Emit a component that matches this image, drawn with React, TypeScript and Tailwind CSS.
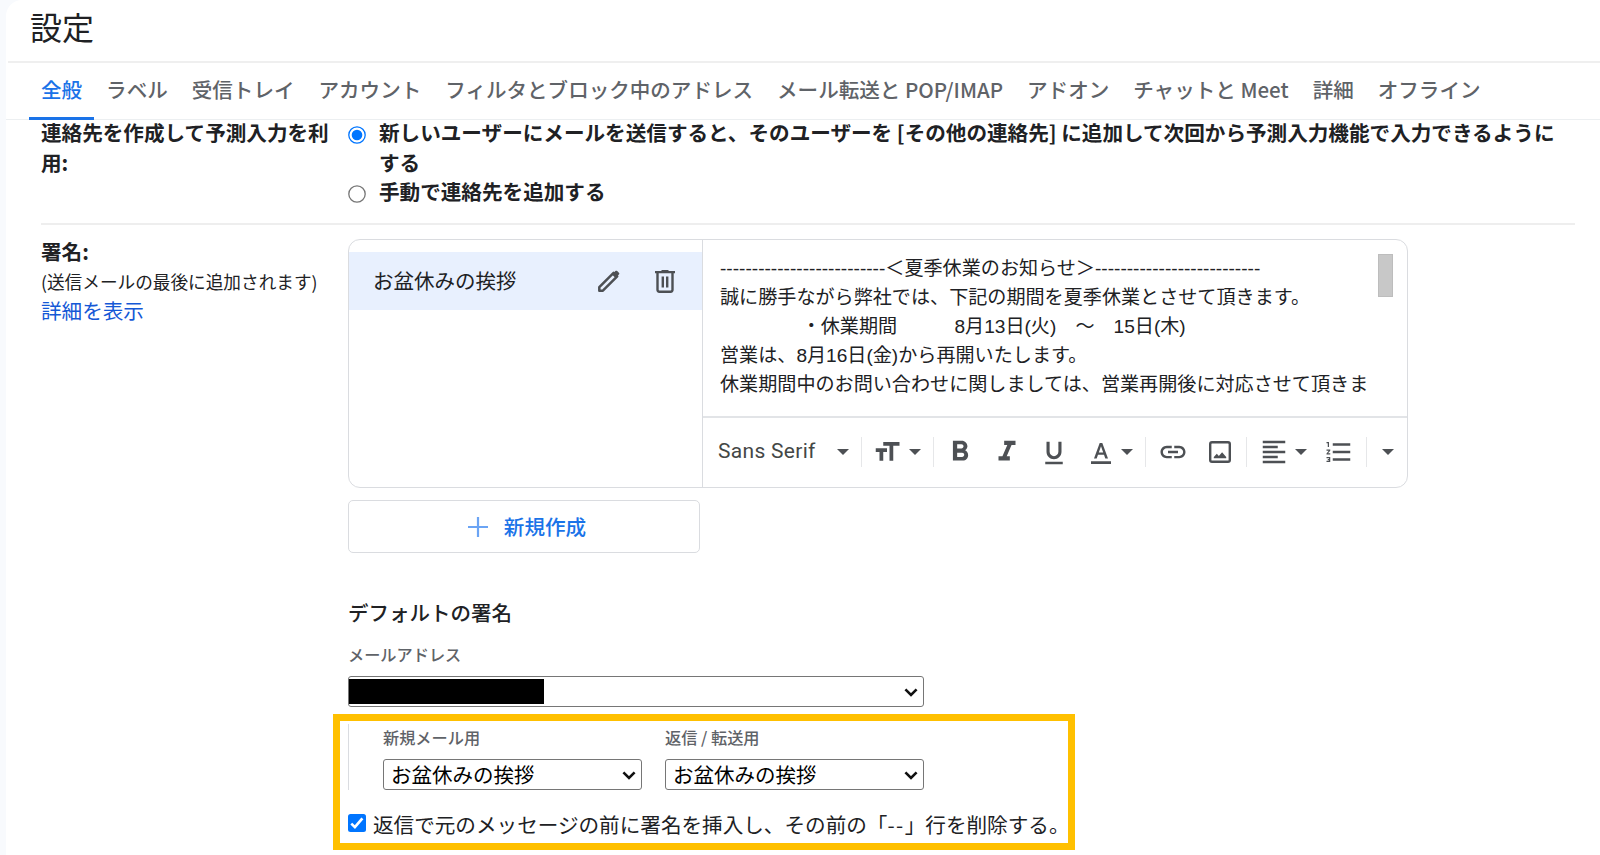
import type { ReactNode } from "react";
import { clsx } from "clsx";
import {
  MdFormatAlignLeft,
  MdFormatBold,
  MdFormatItalic,
  MdFormatListNumbered,
  MdFormatSize,
  MdFormatUnderlined,
  MdLink,
} from "react-icons/md";

const TABS = [
  "全般",
  "ラベル",
  "受信トレイ",
  "アカウント",
  "フィルタとブロック中のアドレス",
  "メール転送と POP/IMAP",
  "アドオン",
  "チャットと Meet",
  "詳細",
  "オフライン",
];

const DASHES = "-".repeat(26);

const SIGNATURE = [
  `${DASHES}＜夏季休業のお知らせ＞${DASHES}`,
  "誠に勝手ながら弊社では、下記の期間を夏季休業とさせて頂きます。",
  "　　　　 ・休業期間　　　8月13日(火)　～　15日(木)",
  "営業は、8月16日(金)から再開いたします。",
  "休業期間中のお問い合わせに関しましては、営業再開後に対応させて頂きま",
];

function Caret({ className }: { className?: string }) {
  return (
    <svg viewBox="0 0 12 6" className={clsx("h-1.5 w-3 shrink-0 fill-[#4d5054]", className)}>
      <path d="M0 0h12L6 6z" />
    </svg>
  );
}

function Divider({ className }: { className?: string }) {
  return <div className={clsx("h-[30px] w-px shrink-0 bg-[#e6e7e9]", className)} />;
}

function Radio({ checked }: { checked?: boolean }) {
  return (
    <svg viewBox="0 0 18 18" className="mt-[7.5px] h-[18px] w-[18px] shrink-0">
      <circle cx="9" cy="9" r="8.2" fill="#fff" stroke={checked ? "#0075ff" : "#767676"} strokeWidth="1.3" />
      {checked && <circle cx="9" cy="9" r="5.3" fill="#0075ff" />}
    </svg>
  );
}

function SelectBox({ children, className }: { children?: ReactNode; className?: string }) {
  return (
    <div
      className={clsx(
        "flex h-[31px] items-center justify-between rounded-[3px] border border-[#767676] bg-white pr-[5px] text-[20.5px] leading-[27px] text-black",
        className,
      )}
    >
      {children}
      <svg viewBox="0 0 14 9" className="mt-px h-[9px] w-3.5 shrink-0">
        <path d="M1.4 1.4 7 7l5.6-5.6" fill="none" stroke="#111" strokeWidth="2.6" />
      </svg>
    </div>
  );
}

function Toolbar() {
  return (
    <div className="flex h-[67px] items-center pl-[15px] text-[#4d5054]">
      <span className="w-[119px] shrink-0 pb-px font-[Roboto] text-[21px] leading-none tracking-[0.3px] text-[#444746]">Sans Serif</span>
      <Caret />
      <Divider className="ml-3" />
      <MdFormatSize className="ml-2.5 h-[30px] w-[30px] shrink-0" />
      <Caret className="ml-[7px]" />
      <Divider className="ml-3" />
      <MdFormatBold className="ml-[9px] h-[34px] w-[34px] shrink-0" />
      <MdFormatItalic className="ml-[13px] h-[34px] w-[34px] shrink-0" />
      <MdFormatUnderlined className="mt-0.5 ml-[15px] h-[30px] w-[30px] shrink-0" />
      <svg viewBox="0 0 20 21" className="mt-[3px] ml-[22px] h-[21px] w-5 shrink-0" fill="currentColor">
        <path d="M0 18.2h20V21H0zM8.7 0h2.6L17 15.5h-2.7L13 11.8H7l-1.3 3.7H3zM7.8 9.5h4.4L10 3.2z" />
      </svg>
      <Caret className="ml-2.5" />
      <Divider className="ml-3" />
      <MdLink className="ml-3 h-[30px] w-[30px] shrink-0" />
      <svg viewBox="0 0 22 22" className="ml-[21px] h-[22px] w-[22px] shrink-0">
        <rect x="1.2" y="1.2" width="19.6" height="19.6" rx="1.8" fill="none" stroke="currentColor" strokeWidth="2.4" />
        <path d="M4.8 17.2v-1.3l3-3.2 2.1 2.2 3.2-3.7 4.1 4.7v1.3z" fill="currentColor" />
      </svg>
      <Divider className="ml-[15px]" />
      <MdFormatAlignLeft className="ml-3 h-[30px] w-[30px] shrink-0" />
      <Caret className="ml-1.5" />
      <MdFormatListNumbered className="ml-[17px] h-[30px] w-[30px] shrink-0" />
      <Divider className="ml-3" />
      <Caret className="ml-[15px]" />
    </div>
  );
}

function SignatureEditor() {
  return (
    <div className="flex h-[249px] w-[1060px] overflow-hidden rounded-xl border border-[#dadce0]">
      <div className="w-[354px] shrink-0 border-r border-[#dadce0] pt-3">
        <div className="flex h-[58px] items-center bg-[#e8f0fe] pl-6">
          <span className="w-[224px] pb-0.5 text-[20.5px]">お盆休みの挨拶</span>
          <svg viewBox="0 0 24 24" className="h-6 w-6 text-[#4d5054]" fill="none" stroke="currentColor" strokeWidth="2.5">
            <path d="M2.3 21.7v-3.6L16.6 3.8l3.6 3.6L5.9 21.7z" strokeLinejoin="round" />
            <path d="m15 5.5 3.5 3.5 3.4-3.4c.6-.6.6-1.2 0-1.8l-1.7-1.7c-.6-.6-1.2-.6-1.8 0z" fill="currentColor" stroke="none" />
          </svg>
          <svg viewBox="0 0 20 23" className="ml-[34px] h-[23px] w-5 text-[#4d5054]" fill="none" stroke="currentColor" strokeWidth="2.4">
            <path d="M0 2.1h20M2.5 2.5v17.3c0 1.2.7 1.9 1.9 1.9h11.2c1.2 0 1.9-.7 1.9-1.9V2.5M7.8 6.4v11.2M12.2 6.4v11.2" />
            <path d="M6.5 1.1h7" />
          </svg>
        </div>
      </div>
      <div className="min-w-0 flex-1">
        <div className="flex h-[178px] justify-between border-b-2 border-[#e2e4e7] pt-3.5 pr-3.5 pl-[17px]">
          <div className="font-['Liberation_Sans','Noto_Sans_CJK_JP',sans-serif] text-[19.1px] leading-[29px] whitespace-pre">
            {SIGNATURE.map((line) => (
              <div key={line}>{line}</div>
            ))}
          </div>
          <div className="h-[43px] w-[15px] border border-[#bdbdbd] bg-[#c8c8c8]" />
        </div>
        <Toolbar />
      </div>
    </div>
  );
}

export default function App() {
  return (
    <div className="h-[855px] w-[1600px] overflow-hidden bg-[#f8fafd] pl-1.5 font-['Noto_Sans_CJK_JP',sans-serif] text-[#202124]">
      <div className="h-full rounded-tl-2xl bg-white">
        <header className="flex h-[61px] items-center pb-2.5 pl-6">
          <h1 className="text-[32px] leading-none">設定</h1>
        </header>
        <div className="ml-0.5 h-0.5 bg-[#efefef]" />

        <nav className="flex h-[57px] border-b border-[#eceff1] pl-[23px] text-[20.55px] font-medium whitespace-nowrap text-[#5f6368]">
          {TABS.map((tab, i) => (
            <div
              key={tab}
              className={clsx(
                "flex items-center px-3",
                i === 0 ? "-mb-px border-b-[3px] border-[#1a73e8] pb-0.5 text-[#1a73e8]" : "pb-1",
              )}
            >
              {tab}
            </div>
          ))}
        </nav>

        <section className="mr-[25px] ml-[35px] flex h-[105px] border-b-2 border-[#eee] text-[20.6px] leading-[29.5px] font-bold">
          <div className="-mt-0.5 w-[307px] shrink-0 pr-4">連絡先を作成して予測入力を利用:</div>
          <div className="-mt-0.5">
            <div className="flex gap-[13px]">
              <Radio checked />
              <span className="w-[1182px]">
                新しいユーザーにメールを送信すると、そのユーザーを [その他の連絡先] に追加して次回から予測入力機能で入力できるようにする
              </span>
            </div>
            <div className="flex gap-[13px]">
              <Radio />
              <span>手動で連絡先を追加する</span>
            </div>
          </div>
        </section>

        <section className="ml-[35px] flex pt-3.5">
          <div className="-mt-0.5 w-[307px] shrink-0 text-[20.6px] leading-[29.5px]">
            <div className="font-bold">署名:</div>
            <div className="text-[17.65px]">(送信メールの最後に追加されます)</div>
            <a className="text-[#1558d6]">詳細を表示</a>
          </div>

          <div>
            <SignatureEditor />
            <button className="mt-3 flex h-[53px] w-[352px] items-center justify-center gap-4 rounded-[5px] border border-[#dadce0] pl-1.5 text-[20.6px] font-medium text-[#1a73e8]">
              <svg viewBox="0 0 20 20" className="h-5 w-5" stroke="#6ba4f4" strokeWidth="2.2">
                <path d="M10 0v20M0 10h20" />
              </svg>
              新規作成
            </button>

            <h2 className="mt-11 text-[20.5px] leading-[30px] font-medium">デフォルトの署名</h2>
            <div className="mt-[15px] text-[16.2px] leading-6 font-medium text-[#5f6368]">メールアドレス</div>
            <SelectBox className="mt-2.5 w-[576px]">
              <span className="h-[25px] w-[195px] bg-black" />
            </SelectBox>

            {/* Per-message defaults, ringed by the highlight frame */}
            <div className="relative pt-[17px]">
              <div className="absolute top-[7px] -left-[15px] h-[136px] w-[742px] border-[7.5px] border-[#ffc000]" />
              <div className="flex h-[66px] gap-[23px] border-l border-[#dadce0] pl-[34px]">
                <div>
                  <div className="h-[35px] pt-px text-[16.2px] leading-6 font-medium text-[#5f6368]">新規メール用</div>
                  <SelectBox className="w-[259px] pl-[7px]">お盆休みの挨拶</SelectBox>
                </div>
                <div>
                  <div className="h-[35px] pt-px text-[16.2px] leading-6 font-medium text-[#5f6368]">返信 / 転送用</div>
                  <SelectBox className="w-[259px] pl-[7px]">お盆休みの挨拶</SelectBox>
                </div>
              </div>
              <label className="mt-[19px] flex text-[20.6px] leading-[30px] whitespace-nowrap">
                <svg viewBox="0 0 18 18" className="mt-[5px] mr-[7px] h-[18px] w-[18px] shrink-0">
                  <rect width="18" height="18" rx="2.5" fill="#0075ff" />
                  <path d="m3.3 9.6 3.6 3.5 7.5-8.8" fill="none" stroke="#fff" strokeWidth="2.7" />
                </svg>
                返信で元のメッセージの前に署名を挿入し、その前の「<span className="tracking-[1.5px]">--</span>」行を削除する。
              </label>
            </div>
          </div>
        </section>
      </div>
    </div>
  );
}
